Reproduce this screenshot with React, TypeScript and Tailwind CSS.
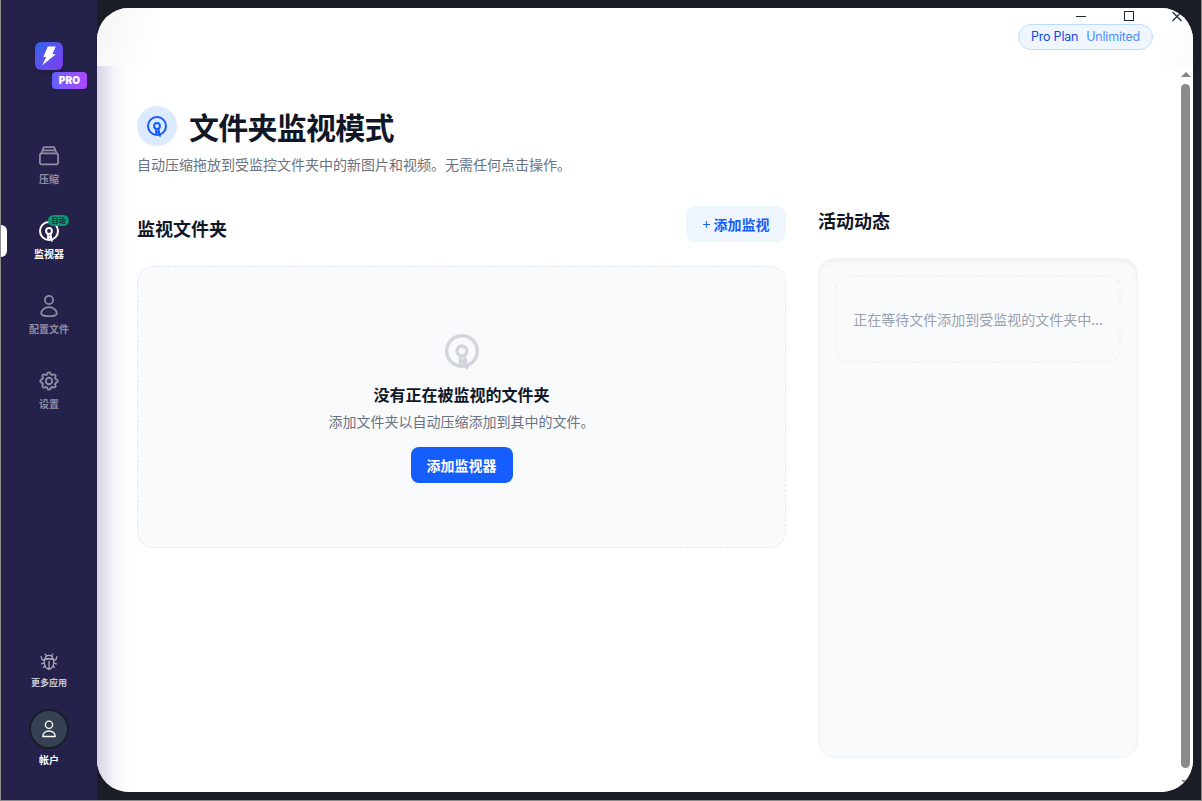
import React, { ReactElement } from "react";

// Icon props type
interface IconProps {
  className?: string;
}

// NavItem props type
interface NavItemProps {
  icon: ReactElement;
  text: string;
  active?: boolean;
  badge?: string;
}

function WatcherIcon({ className }: IconProps) {
  return (
    <svg viewBox="0 0 20 20" fill="none" stroke="currentColor" strokeLinecap="round" strokeLinejoin="round" className={className}>
      <circle cx="10" cy="10" r="9" strokeWidth="2" />
      <circle cx="10" cy="10" r="2.9" strokeWidth="2" />
      <path d="M9 13v4.3l1.8-1.6 2.2 4.2M11.4 12.8l.8 4" strokeWidth="1.8" />
    </svg>
  );
}

function StackIcon({ className }: IconProps) {
  return (
    <svg viewBox="0 0 20 20" fill="none" stroke="currentColor" strokeWidth="1.8" strokeLinecap="round" strokeLinejoin="round" className={className}>
      <rect x="0.9" y="7.4" width="18.2" height="11" rx="2.2" />
      <path d="M2.4 7.2 3.3 4.9Q3.5 4.3 4.2 4.3H15.8Q16.5 4.3 16.7 4.9L17.6 7.2M3.9 4 4.4 2Q4.6 1.2 5.4 1.2H14.6Q15.4 1.2 15.6 2L16.1 4" />
    </svg>
  );
}

function PersonIcon({ className }: IconProps) {
  return (
    <svg viewBox="0 0 18 22" fill="none" stroke="currentColor" strokeWidth="1.8" className={className}>
      <circle cx="9" cy="5" r="4.1" />
      <path d="M9 12.2c4.5 0 7.8 3 7.8 6.2 0 1.8-3.2 2.7-7.8 2.7s-7.8-.9-7.8-2.7c0-3.2 3.3-6.2 7.8-6.2Z" />
    </svg>
  );
}

function GearIcon({ className }: IconProps) {
  return (
    <svg viewBox="0 0 20 20" fill="none" stroke="currentColor" strokeWidth="1.9" strokeLinejoin="round" className={className}>
      <circle cx="10" cy="10" r="3.2" />
      <path d="M17.75 8.49A1.7 1.7 0 0 1 17.75 11.51A1.7 1.7 0 0 0 16.55 14.42A1.7 1.7 0 0 1 14.42 16.55A1.7 1.7 0 0 0 11.51 17.75A1.7 1.7 0 0 1 8.49 17.75A1.7 1.7 0 0 0 5.58 16.55A1.7 1.7 0 0 1 3.45 14.42A1.7 1.7 0 0 0 2.25 11.51A1.7 1.7 0 0 1 2.25 8.49A1.7 1.7 0 0 0 3.45 5.58A1.7 1.7 0 0 1 5.58 3.45A1.7 1.7 0 0 0 8.49 2.25A1.7 1.7 0 0 1 11.51 2.25A1.7 1.7 0 0 0 14.42 3.45A1.7 1.7 0 0 1 16.55 5.58A1.7 1.7 0 0 0 17.75 8.49Z" />
    </svg>
  );
}

function AccountIcon({ className }: IconProps) {
  return (
    <svg viewBox="0 0 14 18" fill="none" stroke="currentColor" strokeWidth="1.3" strokeLinejoin="round" className={className}>
      <circle cx="7" cy="4.7" r="3.6" />
      <path d="M.8 16.5c0-3.3 2.5-5.5 6.2-5.5s6.2 2.2 6.2 5.5Z" />
    </svg>
  );
}

function BugIcon({ className }: IconProps) {
  return (
    <svg viewBox="0 0 18 18" fill="none" stroke="currentColor" strokeWidth="1.3" strokeLinecap="round" strokeLinejoin="round" className={className}>
      <path d="M5.5 4.6Q5.5 2.4 9 2.4T12.5 4.6L13 5.7H5ZM6.3 2.7 5.2 1.2M11.7 2.7l1.1-1.5" />
      <path d="M4.5 6.7Q9 5 13.5 6.7C14.6 11.5 12.6 15.6 9 16.3 5.4 15.6 3.4 11.5 4.5 6.7ZM9 8.5v7.5" />
      <path d="M4.3 7.4 2 6.6 1.1 3.6M13.7 7.4 16 6.6l.9-3M4.2 10.2 1.5 10.8M13.8 10.2l2.7.6M4.9 13l-1.5 1.4M13.1 13l1.5 1.4" />
    </svg>
  );
}

function NavItem({ icon, text, active = false, badge }: NavItemProps) {
  return (
    <li
      className={`relative flex h-[75px] flex-col items-center ${
        active ? "text-white" : "text-[#8e8da4]"
      }`}
    >
      {active && (
        <div className="absolute top-[5px] left-0 h-8 w-1.5 rounded-r-md bg-white" />
      )}
      <div className="relative flex h-[22px] items-center">
        {icon}
        {badge && (
          <span className="absolute -top-[5px] left-[9px] flex h-[11px] w-[21px] items-center justify-center rounded-full bg-[#11946f] text-[7px] font-bold text-[#24224a]">
            {badge}
          </span>
        )}
      </div>
      <span className="mt-1 text-[10px] leading-[15px] font-bold">{text}</span>
    </li>
  );
}

function Sidebar() {
  return (
    <aside className="flex w-24 flex-col bg-[#24224a]">
      <div className="relative mt-[42px] ml-[34px] flex size-7 items-center justify-center rounded-md bg-gradient-to-br from-[#2563eb] to-[#7c3aed] shadow-md">
        <svg viewBox="0 0 14 20" className="h-5 w-3.5 fill-white">
          <path d="M5.8.5H13.8L10.3 8.2H13.8L.3 19.3 4.2 11H1.3Z" />
        </svg>
        <span className="absolute top-[30px] left-[17px] flex h-[17px] w-[35px] items-center justify-center rounded bg-gradient-to-r from-[#625fff] to-[#ad46ff] font-['Inter',sans-serif] text-[10px] font-black tracking-[0.2px] text-white">
          PRO
        </span>
      </div>
      <ul className="mt-[75px]">
        <NavItem icon={<StackIcon className="size-5" />} text="压缩" />
        <NavItem icon={<WatcherIcon className="size-5 overflow-visible" />} text="监视器" active badge="自动" />
        <NavItem icon={<PersonIcon className="h-[22px] w-[18px]" />} text="配置文件" />
        <NavItem icon={<GearIcon className="size-5" />} text="设置" />
      </ul>
      <div className="mt-auto flex flex-col items-center pb-[33px]">
        <BugIcon className="size-[18px] text-[#a9a8ba]" />
        <span className="mt-1 text-[9px] leading-[15px] font-bold text-[#c8c7d2]">更多应用</span>
        <div className="mt-[19px] flex size-10 items-center justify-center rounded-full border-2 border-[#1b1d29] bg-[#364153] text-white">
          <AccountIcon className="h-[18px] w-3.5" />
        </div>
        <span className="mt-[3px] text-[10px] leading-[15px] font-bold text-white">帐户</span>
      </div>
    </aside>
  );
}

function TitleBar() {
  return (
    <header className="relative flex h-[58px] shrink-0 items-start justify-end bg-[linear-gradient(105deg,#f5f5f5_0px,#ffffff_65px,#ffffff_1030px,#f8f8f8_1100px)] pt-4 pr-10">
      <div className="flex h-[26px] w-[135px] items-center justify-center gap-2 rounded-full border border-[#bedbff] bg-[#eff6ff] font-['Inter',sans-serif] text-[12.5px] tracking-[-0.2px]">
        <span className="text-[#1447e6]">Pro Plan</span>
        <span className="text-[#4d8dff]">Unlimited</span>
      </div>
      {/* Window controls */}
      <svg viewBox="0 0 108 14" className="absolute top-0.5 right-2 h-3.5 w-[108px] overflow-visible fill-none stroke-[#1e2939]" strokeWidth="1" shapeRendering="crispEdges">
        <path d="M-1 6.5h10M47.5 1.5h9v9h-9z" />
        <path d="m95.5 2 9 9M104.5 2l-9 9" shapeRendering="auto" strokeWidth="1.2" />
      </svg>
    </header>
  );
}

function ScrollBar() {
  return (
    <div className="flex w-[15px] flex-col items-center pt-1.5">
      <svg viewBox="0 0 10 5" className="h-[5px] w-2.5 fill-[#858585]">
        <path d="M5 0 10 5H0Z" />
      </svg>
      <div className="mt-[7px] h-[684px] w-[9px] rounded-full bg-[#8b8b8b]" />
      <svg viewBox="0 0 10 5" className="mt-3 h-[5px] w-2.5 fill-[#858585]">
        <path d="M0 0H10L5 5Z" />
      </svg>
    </div>
  );
}

function WatchedFolders() {
  return (
    <section className="flex-1">
      <div className="flex h-9 items-center justify-between">
        <h2 className="pt-2 text-lg font-bold text-[#101828]">监视文件夹</h2>
        <button className="h-9 w-[100px] rounded-lg bg-[#eff6ff] text-sm font-bold text-[#155dfc]">
          <span className="font-normal">+</span> 添加监视
        </button>
      </div>
      <div className="mt-6 flex h-[282px] flex-col items-center rounded-2xl border border-dashed border-[#e5e7eb] bg-[#f9fafb] pt-[67px]">
        <WatcherIcon className="size-[34px] overflow-visible text-[#d1d5dc]" />
        <h3 className="mt-[14px] text-base font-bold text-[#101828]">没有正在被监视的文件夹</h3>
        <p className="mt-[5px] text-sm text-[#6a7282]">添加文件夹以自动压缩添加到其中的文件。</p>
        <button className="mt-4 h-9 w-[102px] rounded-lg bg-[#155dfc] text-sm font-bold text-white">
          添加监视器
        </button>
      </div>
    </section>
  );
}

function ActivityFeed() {
  return (
    <section className="w-80">
      <h2 className="text-lg leading-7 font-bold text-[#101828]">活动动态</h2>
      <div className="mt-6 h-[500px] rounded-2xl border border-[#f3f4f6] bg-[#f9fafb] p-4 shadow-[inset_0_2px_4px_rgba(0,0,0,0.05)]">
        <div className="flex h-[88px] items-center justify-center rounded-xl border-2 border-dashed border-[#f3f4f6] text-sm text-[#99a1af]">
          正在等待文件添加到受监视的文件夹中...
        </div>
      </div>
    </section>
  );
}

export default function App() {
  return (
    <div className="flex h-[801px] w-[1202px] overflow-hidden border-r border-b border-l border-[#8c8c8c] bg-[#1a1d26] font-['Noto_Sans_CJK_SC',sans-serif]">
      <Sidebar />
      <div className="mt-2 flex h-[784px] w-[1096px] flex-col overflow-hidden rounded-[32px] bg-white">
        <TitleBar />
        <div className="flex flex-1 bg-[linear-gradient(90deg,#d6d6e6_0px,#e5e5ef_9px,#f6f6fa_18px,#fcfcfd_27px,#ffffff_38px)]">
          <main className="flex-1 pt-10 pr-10 pl-10">
            <div className="flex h-10 items-center gap-3">
              <div className="flex size-10 items-center justify-center rounded-full bg-[#dbeafe] text-[#155dfc]">
                <WatcherIcon className="size-5 overflow-visible" />
              </div>
              <h1 className="text-3xl font-bold tracking-tight text-[#101828]">文件夹监视模式</h1>
            </div>
            <p className="mt-2 text-sm text-[#6a7282]">
              自动压缩拖放到受监控文件夹中的新图片和视频。无需任何点击操作。
            </p>
            <div className="mt-8 flex gap-8">
              <WatchedFolders />
              <ActivityFeed />
            </div>
          </main>
          <ScrollBar />
        </div>
      </div>
    </div>
  );
}
